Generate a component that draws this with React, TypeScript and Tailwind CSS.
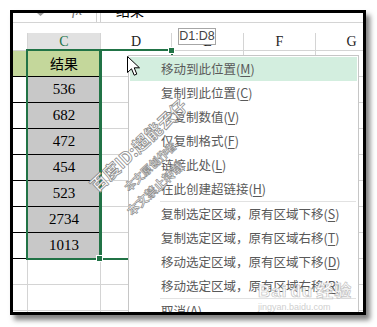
import React from "react";

const cells = ["结果", "536", "682", "472", "454", "523", "2734", "1013", "", "", ""];

const menuItems: ([string, string] | null)[] = [
  ["移动到此位置", "M"],
  ["复制到此位置", "C"],
  ["仅复制数值", "V"],
  ["仅复制格式", "F"],
  ["链接此处", "L"],
  ["在此创建超链接", "H"],
  null,
  ["复制选定区域，原有区域下移", "S"],
  ["复制选定区域，原有区域右移", "T"],
  ["移动选定区域，原有区域下移", "D"],
  ["移动选定区域，原有区域右移", "R"],
  null,
  ["取消", "A"],
];

function GridRow({ value, index }: { value: string; index: number }) {
  const inData = index < 8;
  const head = index === 0;
  return (
    <div className="flex h-[26px] shrink-0">
      <div
        className={`w-[15px] shrink-0 border-b border-r border-r-[#d4d4d4] ${
          inData ? "border-b-black" : "border-b-[#d4d4d4]"
        } ${head ? "bg-[#c4d79b]" : "bg-white"}`}
      />
      <div
        className={`flex w-[73px] shrink-0 items-center justify-center border-b border-r border-r-[#d4d4d4] ${
          inData ? "border-b-black" : "border-b-[#d4d4d4]"
        } ${head ? "bg-[#c4d79b] font-['Noto_Sans_CJK_SC',sans-serif] text-[14px]" : ""} ${
          inData && !head ? "bg-[#c8c8c8] font-['Liberation_Serif',serif] text-[15px]" : ""
        } text-black`}
      >
        {value}
      </div>
      <div className="w-[71px] shrink-0 border-b border-r border-[#d4d4d4]" />
      <div className="w-[72px] shrink-0 border-b border-r border-[#d4d4d4]" />
      <div className="w-[72px] shrink-0 border-b border-r border-[#d4d4d4]" />
      <div className="w-[72px] shrink-0 border-b border-r border-[#d4d4d4]" />
    </div>
  );
}

export default function App() {
  return (
    <div className="h-[327px] w-[377px] bg-white pl-[10px] pt-[10px]">
      <div className="relative flex h-[305px] w-[356px] flex-col overflow-hidden border-[3px] border-black bg-white shadow-[4px_5px_5px_rgba(0,0,0,0.5)]">
        {/* formula bar, cut off at the top */}
        <div className="flex h-[10px] shrink-0 border-b border-[#d4d4d4]">
          <div className="flex w-[83px] shrink-0 items-start">
            <svg className="ml-[24px]" width="7" height="3" viewBox="0 0 7 3">
              <polygon points="0,0 7,0 3.5,3" fill="#9a9a9a" />
            </svg>
            <span className="ml-[28px] mt-[-9px] font-['Liberation_Serif',serif] text-[14px] italic leading-[14px] text-[#6b6b6b]">
              fx
            </span>
          </div>
          <div className="w-[5px] shrink-0 border-x border-[#d0d0d0]" />
          <div className="flex items-start pl-[15px]">
            <span className="mt-[-10px] font-['Noto_Sans_CJK_SC',sans-serif] text-[14px] leading-[14px] text-black">
              结果
            </span>
          </div>
        </div>
        <div className="h-[10px] shrink-0" />

        {/* column headers */}
        <div className="flex h-[18px] shrink-0 border-b border-[#d4d4d4] font-['Liberation_Serif',serif] text-[14px]">
          <div className="w-[15px] shrink-0 border-r border-[#d4d4d4]" />
          <div className="flex w-[73px] shrink-0 items-center justify-center border-r border-[#d4d4d4] bg-[#e1e1e1] text-[#217346]">
            C
          </div>
          <div className="flex w-[71px] shrink-0 items-center justify-center border-r border-[#d4d4d4] text-[#222]">
            D
          </div>
          <div className="flex w-[72px] shrink-0 items-center justify-center border-r border-[#d4d4d4] text-[#222]">
            E
          </div>
          <div className="flex w-[72px] shrink-0 items-center justify-center border-r border-[#d4d4d4] text-[#222]">
            F
          </div>
          <div className="flex w-[72px] shrink-0 items-center justify-center border-r border-[#d4d4d4] text-[#222]">
            G
          </div>
        </div>

        {/* grid */}
        {cells.map((v, i) => (
          <GridRow key={i} value={v} index={i} />
        ))}

        {/* selection C1:C8 and drag outline D1:D8 */}
        <div className="absolute left-[13px] top-[36px] h-[211px] w-[75px] border-2 border-[#217346]" />
        <div className="absolute left-[87px] top-[36px] h-[211px] w-[73px] border-2 border-[#217346]" />
        <div className="absolute left-[83px] top-[242px] h-[7px] w-[7px] border border-white bg-[#217346]" />
        <div className="absolute left-[155px] top-[34px] h-[7px] w-[7px] border border-white bg-[#217346]" />

        {/* range tooltip */}
        <div className="absolute left-[165px] top-[15px] flex h-[17px] w-[38px] items-center justify-center border border-[#a6a6a6] bg-white font-['Liberation_Sans',sans-serif] text-[12.5px] text-[#444]">
          D1:D8
        </div>

        {/* context menu */}
        <div className="absolute left-[115px] top-[42px] w-[231px] border border-[#c6c6c6] bg-white p-px font-['Noto_Sans_CJK_SC',sans-serif] text-[12.5px] text-[#595959]">
          {menuItems.map((item, i) =>
            item ? (
              <div
                key={i}
                className={`flex h-[24px] items-center whitespace-nowrap pl-[31px] ${
                  i === 0 ? "bg-[#d3eedf]" : ""
                }`}
              >
                {item[0]}(<span className="underline underline-offset-2">{item[1]}</span>)
              </div>
            ) : (
              <div key={i} className="ml-[30px] mr-px h-px bg-[#e2e2e2]" />
            )
          )}
        </div>

        {/* watermark */}
        <div className="pointer-events-none absolute left-[125px] top-[132px] -translate-x-1/2 -translate-y-1/2 -rotate-[43deg] whitespace-nowrap font-['Noto_Sans_CJK_SC',sans-serif] text-[17px] font-bold text-white [-webkit-text-stroke:0.8px_#8e8e8e]">
          百度ID:超能云仔
        </div>
        <div className="pointer-events-none absolute left-[137px] top-[153px] -translate-x-1/2 -translate-y-1/2 -rotate-[43deg] whitespace-nowrap font-['Noto_Sans_CJK_SC',sans-serif] text-[11px] font-bold text-white [-webkit-text-stroke:0.7px_#8e8e8e]">
          本文原创作者
        </div>
        <div className="pointer-events-none absolute left-[142px] top-[175px] -translate-x-1/2 -translate-y-1/2 -rotate-[43deg] whitespace-nowrap font-['Noto_Sans_CJK_SC',sans-serif] text-[12px] font-bold text-white [-webkit-text-stroke:0.7px_#8e8e8e]">
          本文禁止转载
        </div>
        <div className="pointer-events-none absolute left-[245px] top-[268px] flex flex-col items-start leading-none">
          <span className="font-['Liberation_Sans',sans-serif] text-[17px] font-bold tracking-[1px] text-white [-webkit-text-stroke:0.7px_#c4c4c4]">
            Bai<span className="mx-[3px]">du</span>
            <span className="font-['Noto_Sans_CJK_SC',sans-serif]">经验</span>
          </span>
          <span className="mt-[3px] font-['Liberation_Sans',sans-serif] text-[9px] text-[#cfcfcf]">
            jingyan.baidu.com
          </span>
        </div>

        {/* mouse cursor */}
        <svg className="absolute left-[114px] top-[43px]" width="14" height="21" viewBox="0 0 14 21">
          <path
            d="M0.5 0.5 L0.5 16.5 L4.5 12.8 L7.2 19.2 L9.8 18.1 L7.2 11.8 L12.5 11.8 Z"
            fill="white"
            stroke="black"
            strokeWidth="1"
            strokeLinejoin="round"
          />
        </svg>
      </div>
    </div>
  );
}
